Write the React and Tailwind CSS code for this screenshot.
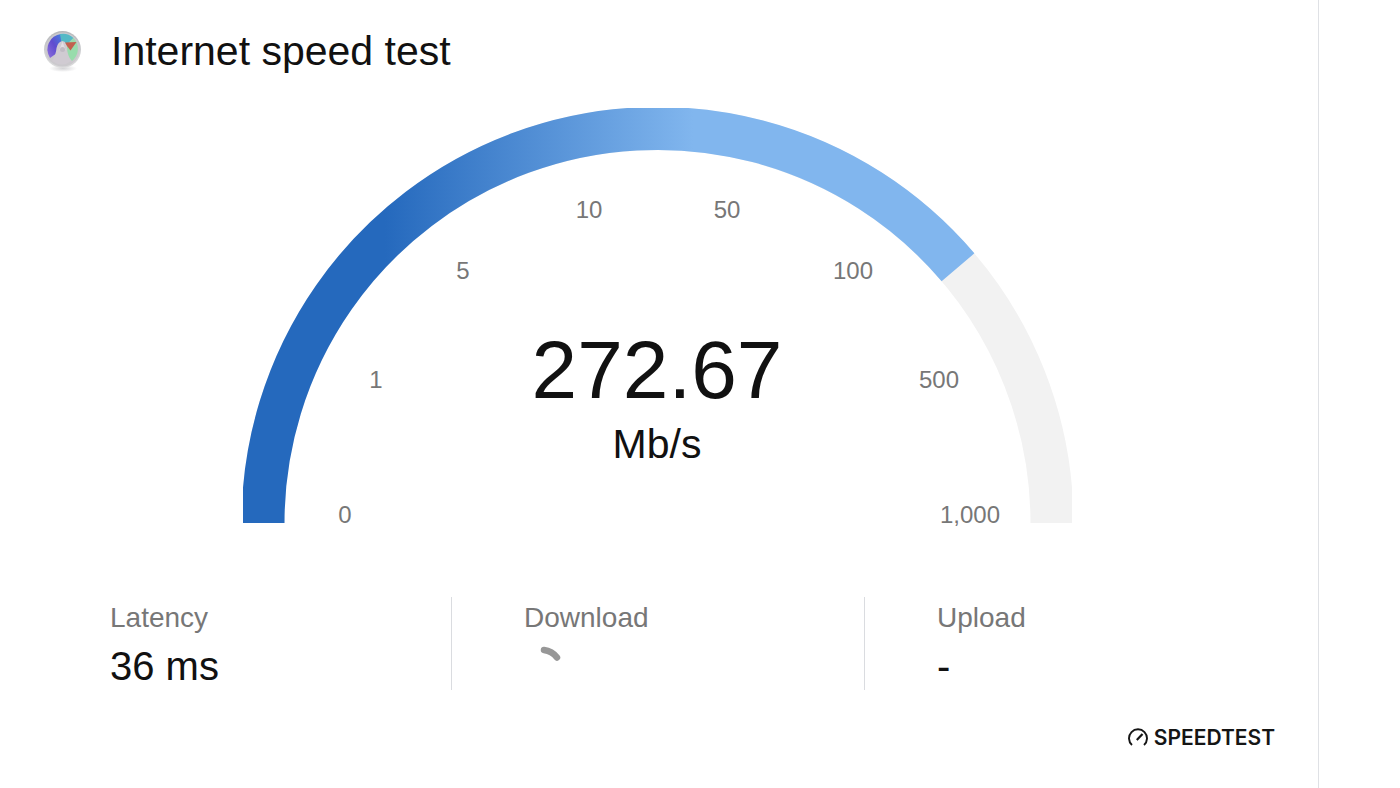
const TICKS = [
  { label: "0", x: 102, y: 415 },
  { label: "1", x: 133, y: 280 },
  { label: "5", x: 220, y: 171 },
  { label: "10", x: 346, y: 110 },
  { label: "50", x: 484, y: 110 },
  { label: "100", x: 610, y: 171 },
  { label: "500", x: 696, y: 280 },
  { label: "1,000", x: 727, y: 415 },
];

function AppIcon() {
  return (
    <svg viewBox="0 0 42 44" className="h-[44px] w-[42px] shrink-0" aria-hidden="true">
      <defs>
        <linearGradient id="rim" x1="0" y1="0" x2="0" y2="1">
          <stop offset="0" stopColor="#b4b6b9" />
          <stop offset="0.6" stopColor="#d0d1d3" />
          <stop offset="1" stopColor="#dcdcdd" />
        </linearGradient>
        <linearGradient id="purple" x1="0" y1="1" x2="1" y2="0">
          <stop offset="0" stopColor="#8f70dc" />
          <stop offset="0.5" stopColor="#5f4ccf" />
          <stop offset="1" stopColor="#4484e0" />
        </linearGradient>
        <radialGradient id="shade">
          <stop offset="0" stopColor="#d4d4d6" />
          <stop offset="1" stopColor="#d4d4d6" stopOpacity="0" />
        </radialGradient>
      </defs>
      <ellipse cx="21" cy="39.500" rx="14" ry="3.500" fill="url(#shade)" />
      <circle cx="20.500" cy="20.500" r="18.500" fill="url(#rim)" />
      <circle cx="20.500" cy="20.500" r="17" fill="#cbc9cd" />
      <path d="M20.500 20 L8 29 A15.500 15.500 0 0 1 19 5 Z" fill="url(#purple)" />
      <path d="M20.500 20 L18 5 A15.500 15.500 0 0 1 31.500 9 Z" fill="#55b9c6" />
      <path d="M20.500 20 L31.500 9 A15.500 15.500 0 0 1 30 32 Z" fill="#98dcac" />
      <path d="M10 32 Q14 26 14.500 19 Q16 12.500 20.500 12 Q25 13 25 18 Q25 25 29 32 Q20 39 10 32 Z" fill="#d0cbd2" />
      <path d="M23 13.500 L34.500 13 L28.500 21.500 L25 17 Z" fill="#c2604e" />
      <path d="M17.500 21 L20.500 12.500 L23.500 21 Z" fill="#e2dde4" />
      <circle cx="20.500" cy="20.500" r="2.500" fill="#c0bbc4" />
    </svg>
  );
}

function Gauge() {
  return (
    <svg
      viewBox="0 0 829 415"
      className="block h-auto w-full overflow-visible"
      role="img"
      aria-label="272.67 Mb/s"
    >
      <defs>
        <linearGradient id="speed" gradientUnits="userSpaceOnUse" x1="142" y1="0" x2="450" y2="0">
          <stop offset="0" stopColor="#2569bd" />
          <stop offset="1" stopColor="#81b6ee" />
        </linearGradient>
        <clipPath id="dial">
          <rect width="829" height="415" />
        </clipPath>
      </defs>
      <g fill="none" strokeWidth="43" clipPath="url(#dial)">
        <path d="M20 415 A394.500 394.500 0 0 1 809 415" stroke="#f2f2f2" />
        <path d="M20 415 A394.500 394.500 0 0 1 715 159.300" stroke="url(#speed)" />
      </g>
      <g fill="#777777" fontSize="24" textAnchor="middle">
        {TICKS.map((t) => (
          <text key={t.label} x={t.x} y={t.y}>
            {t.label}
          </text>
        ))}
      </g>
      <g fill="#111111" textAnchor="middle">
        <text x="414" y="290" fontSize="82">272.67</text>
        <text x="414" y="350" fontSize="41">Mb/s</text>
      </g>
    </svg>
  );
}

function Stat({ label, divided, children }) {
  return (
    <div className={divided ? "border-l border-[#dadce0] pl-[72px]" : "pl-[72px]"}>
      <dt className="pt-[2px] text-[28px] leading-[38px] text-[#777777]">{label}</dt>
      <dd className="mt-1 h-[49px] text-[40px] leading-[51px] text-[#111111]">{children}</dd>
    </div>
  );
}

function Spinner() {
  return (
    <svg viewBox="0 0 42 42" className="h-[42px] w-[42px]" role="status" aria-label="Measuring download">
      <path d="M20 9 Q28 10 33 16.500" fill="none" stroke="#979797" strokeWidth="6.500" strokeLinecap="round" />
    </svg>
  );
}

export default function App() {
  return (
    <div className="flex min-h-screen bg-white font-['Liberation_Sans',Arial,sans-serif]">
      <main className="min-w-0 flex-1 border-r border-[#dfe1e5] pt-[27px] pr-[41px] pl-[38px]">
        <header className="flex h-12 items-center gap-[27px] pl-1">
          <AppIcon />
          <h1 className="text-[41px] leading-[48px] text-[#111111]">Internet speed test</h1>
        </header>

        <div className="mx-auto mt-[33px] max-w-[829px]">
          <Gauge />
        </div>

        <dl className="mt-[74px] grid grid-cols-3">
          <Stat label="Latency">36 ms</Stat>
          <Stat label="Download" divided>
            <Spinner />
          </Stat>
          <Stat label="Upload" divided>-</Stat>
        </dl>

        <footer className="mt-9 flex justify-end pr-[2px]">
          <a href="#speedtest" className="flex items-center gap-[5px] text-[#151515]">
            <svg viewBox="0 0 21 20" className="h-5 w-[21px]" fill="none" stroke="currentColor" aria-hidden="true">
              <path d="M4 17 A9 9 0 1 1 16 17" strokeWidth="1.900" />
              <path d="M8.800 12 L14.500 6" strokeWidth="2.200" />
            </svg>
            <span className="font-['Inter',sans-serif] text-[21px] leading-6 font-semibold">SPEEDTEST</span>
          </a>
        </footer>
      </main>
      <aside className="w-[81px] shrink-0" />
    </div>
  );
}
